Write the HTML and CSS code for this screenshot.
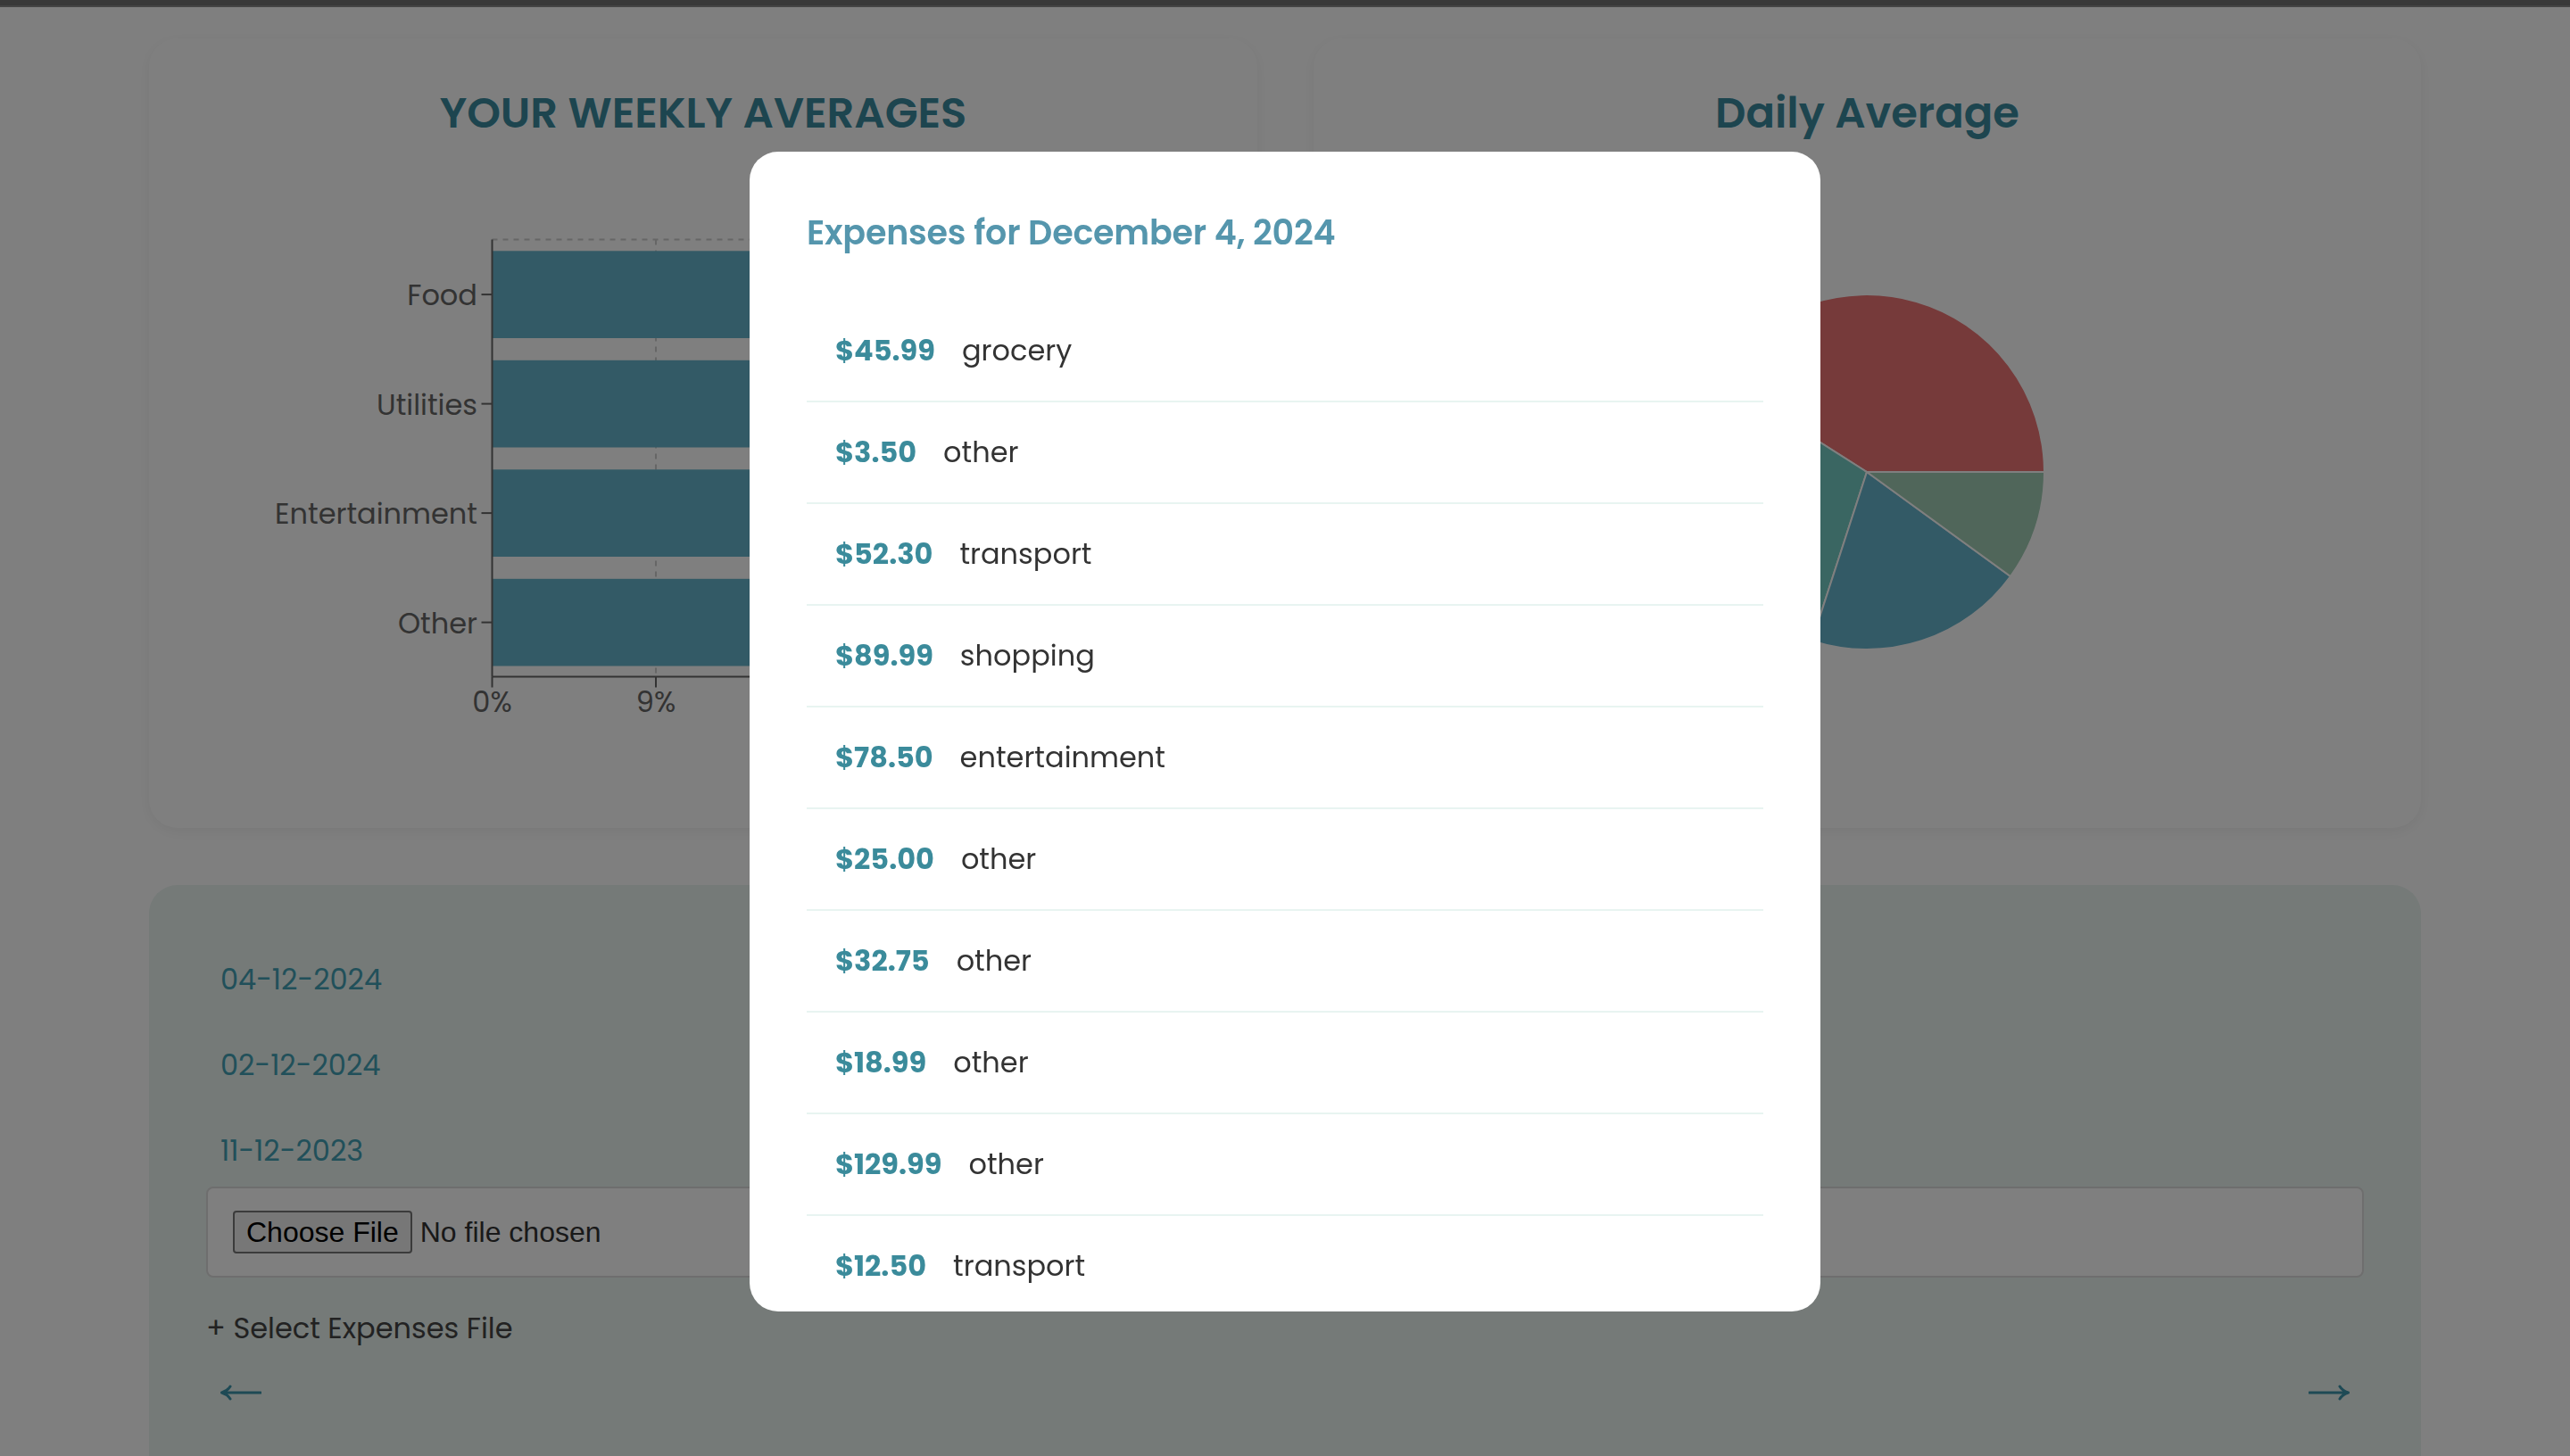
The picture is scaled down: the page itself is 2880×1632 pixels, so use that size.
FILE: index.html
```html
<!DOCTYPE html>
<html lang="en">
<head>
<meta charset="utf-8">
<title>Expenses</title>
<link rel="stylesheet" href="styles.css">
</head>
<body>
<div class="topbar"></div>
<main class="page">
  <section class="charts">
    <article class="card">
      <h2 class="card-title">YOUR WEEKLY AVERAGES</h2>
      <svg class="chart" width="1242" height="722" viewBox="0 0 1242 722">
        <g class="grid">
          <line x1="384.5" y1="105.6" x2="1118.5" y2="105.6"/>
          <line x1="568" y1="105.6" x2="568" y2="595.5"/>
          <line x1="751.5" y1="105.6" x2="751.5" y2="595.5"/>
          <line x1="935" y1="105.6" x2="935" y2="595.5"/>
          <line x1="1118.5" y1="105.6" x2="1118.5" y2="595.5"/>
        </g>
        <g class="bars">
          <rect x="384.5" y="118.3" width="693" height="97.7"/>
          <rect x="384.5" y="240.8" width="571" height="97.7"/>
          <rect x="384.5" y="363.3" width="449" height="97.7"/>
          <rect x="384.5" y="485.8" width="326" height="97.7"/>
        </g>
        <g class="axis">
          <line x1="384.5" y1="105.6" x2="384.5" y2="595.5"/>
          <line x1="384.5" y1="595.5" x2="1118.5" y2="595.5"/>
          <line x1="372.5" y1="167.1" x2="384.5" y2="167.1"/>
          <line x1="372.5" y1="289.6" x2="384.5" y2="289.6"/>
          <line x1="372.5" y1="412.1" x2="384.5" y2="412.1"/>
          <line x1="372.5" y1="534.6" x2="384.5" y2="534.6"/>
          <line x1="384.5" y1="595.5" x2="384.5" y2="607.5"/>
          <line x1="568" y1="595.5" x2="568" y2="607.5"/>
          <line x1="751.5" y1="595.5" x2="751.5" y2="607.5"/>
          <line x1="935" y1="595.5" x2="935" y2="607.5"/>
          <line x1="1118.5" y1="595.5" x2="1118.5" y2="607.5"/>
        </g>
        <g class="labels">
          <text x="368" y="179" text-anchor="end">Food</text>
          <text x="368" y="301.5" text-anchor="end">Utilities</text>
          <text x="368" y="424" text-anchor="end">Entertainment</text>
          <text x="368" y="546.5" text-anchor="end">Other</text>
          <text x="384.5" y="635" text-anchor="middle">0%</text>
          <text x="568" y="635" text-anchor="middle">9%</text>
          <text x="751.5" y="635" text-anchor="middle">18%</text>
          <text x="935" y="635" text-anchor="middle">27%</text>
          <text x="1118.5" y="635" text-anchor="middle">36%</text>
        </g>
      </svg>
    </article>
    <article class="card">
      <h2 class="card-title">Daily Average</h2>
      <svg class="chart" width="1241" height="722" viewBox="0 0 1241 722">
        <g class="pie">
          <path class="s-red" d="M620,366 L819,366 A199,199 0 0,0 452,259.4 Z"/>
          <path class="s-teal" d="M620,366 L452,259.4 A199,199 0 0,0 558.5,555.3 Z"/>
          <path class="s-blue" d="M620,366 L558.5,555.3 A199,199 0 0,0 781,483 Z"/>
          <path class="s-green" d="M620,366 L781,483 A199,199 0 0,0 819,366 Z"/>
        </g>
      </svg>
    </article>
  </section>

  <section class="files">
    <ul class="dates">
      <li>04-12-2024</li>
      <li>02-12-2024</li>
      <li>11-12-2023</li>
    </ul>
    <input class="file-input" type="file">
    <p class="add">+ Select Expenses File</p>
    <div class="nav">
      <button class="nav-btn" aria-label="Previous">
        <svg width="46" height="20" viewBox="0 0 46 20"><path d="M45,10 L1.5,10 M1.5,10 Q8,8 11,3 M1.5,10 Q8,12 11,17"/></svg>
      </button>
      <button class="nav-btn" aria-label="Next">
        <svg width="46" height="20" viewBox="0 0 46 20"><path d="M1,10 L44.5,10 M44.5,10 Q38,8 35,3 M44.5,10 Q38,12 35,17"/></svg>
      </button>
    </div>
  </section>
</main>

<div class="overlay">
  <div class="modal">
    <h3 class="modal-title">Expenses for December 4, 2024</h3>
    <ul class="expenses">
      <li><span class="amt">$45.99</span><span class="cat">grocery</span></li>
      <li><span class="amt">$3.50</span><span class="cat">other</span></li>
      <li><span class="amt">$52.30</span><span class="cat">transport</span></li>
      <li><span class="amt">$89.99</span><span class="cat">shopping</span></li>
      <li><span class="amt">$78.50</span><span class="cat">entertainment</span></li>
      <li><span class="amt">$25.00</span><span class="cat">other</span></li>
      <li><span class="amt">$32.75</span><span class="cat">other</span></li>
      <li><span class="amt">$18.99</span><span class="cat">other</span></li>
      <li><span class="amt">$129.99</span><span class="cat">other</span></li>
      <li><span class="amt">$12.50</span><span class="cat">transport</span></li>
    </ul>
  </div>
</div>
</body>
</html>
```

FILE: styles.css
```css
html, body {
  margin: 0;
  padding: 0;
  overflow: hidden;
  height: 100%;
}

body {
  background: #ffffff;
  font-family: "Poppins", "Inter", "Noto Sans", sans-serif;
  color: #333333;
}

.topbar {
  height: 6px;
  background: #727272;
  border-bottom: 2px solid #888888;
}

.page {
  padding: 35px 167px 0;
}

.charts {
  display: grid;
  grid-template-columns: 1242px 1241px;
  gap: 63px;
}

.card {
  height: 885px;
  box-sizing: border-box;
  padding-top: 48px;
  background: #ffffff;
  border-radius: 32px;
  box-shadow: 0 4px 16px rgba(0, 0, 0, 0.06);
  display: flex;
  flex-direction: column;
  align-items: center;
}

.card-title {
  margin: 0;
  font-size: 48px;
  line-height: 72px;
  font-weight: 600;
  color: #3a8a9e;
}

.chart {
  display: block;
  flex: none;
}

.grid line {
  stroke: #cccccc;
  stroke-width: 2;
  stroke-dasharray: 6 6;
}

.bars rect {
  fill: #66b4cc;
}

.axis line {
  stroke: #666666;
  stroke-width: 2;
}

.labels text {
  font-family: "Poppins", "Inter", "Noto Sans", sans-serif;
  font-size: 32px;
  fill: #666666;
}

.pie path {
  stroke: #ffffff;
  stroke-width: 2;
}

.s-red { fill: #ec7474; }
.s-teal { fill: #74ccc4; }
.s-blue { fill: #66b4cc; }
.s-green { fill: #a0ccb4; }

.files {
  margin-top: 64px;
  height: 800px;
  box-sizing: border-box;
  padding: 58px 64px 0;
  background: #eaf4f0;
  border-radius: 32px;
}

.dates {
  list-style: none;
  margin: 0 0 -8px;
  padding: 0;
}

.dates li {
  padding: 24px 16px;
  font-size: 32px;
  line-height: 48px;
  color: #42a0b4;
}

.file-input {
  display: block;
  width: 100%;
  box-sizing: border-box;
  padding: 25px 28px;
  border: 2px solid #dcdcdc;
  border-radius: 8px;
  background: #ffffff;
  font-family: "Liberation Sans", Arial, sans-serif;
  font-size: 32px;
  line-height: 48px;
  color: #333333;
}

.file-input::file-selector-button {
  font-family: "Liberation Sans", Arial, sans-serif;
  font-size: 32px;
  line-height: 40px;
  padding: 2px 13px;
  margin-right: 9px;
  border: 2px solid #767676;
  border-radius: 4px;
  background: #efefef;
  color: #000000;
}

.add {
  margin: 33px 0 0;
  font-size: 32px;
  line-height: 48px;
  color: #444444;
}

.nav {
  margin-top: 24px;
  padding: 0 16px;
  display: flex;
  justify-content: space-between;
  align-items: center;
}

.nav-btn {
  height: 48px;
  padding: 0;
  border: 0;
  background: transparent;
  display: flex;
  align-items: center;
}

.nav-btn svg {
  display: block;
}

.nav-btn path {
  fill: none;
  stroke: #3c94aa;
  stroke-width: 3;
  stroke-linecap: round;
}

.overlay {
  position: fixed;
  inset: 0;
  background: rgba(0, 0, 0, 0.5);
  display: flex;
  justify-content: center;
  align-items: flex-start;
}

.modal {
  margin-top: 170px;
  width: 1200px;
  height: 1300px;
  box-sizing: border-box;
  padding: 62px 64px 0;
  background: #ffffff;
  border-radius: 32px;
  overflow: hidden;
}

.modal-title {
  margin: 0 0 47px;
  font-size: 38px;
  line-height: 58px;
  font-weight: 600;
  color: #5596ad;
  letter-spacing: -0.2px;
}

.expenses {
  list-style: none;
  margin: 0;
  padding: 0;
}

.expenses li {
  display: flex;
  align-items: baseline;
  padding: 32px;
  font-size: 32px;
  line-height: 48px;
  border-bottom: 2px solid #e8f4f1;
}

.amt {
  font-weight: 700;
  color: #3b8b9b;
  margin-right: 30px;
}

.cat {
  color: #333333;
}
```
